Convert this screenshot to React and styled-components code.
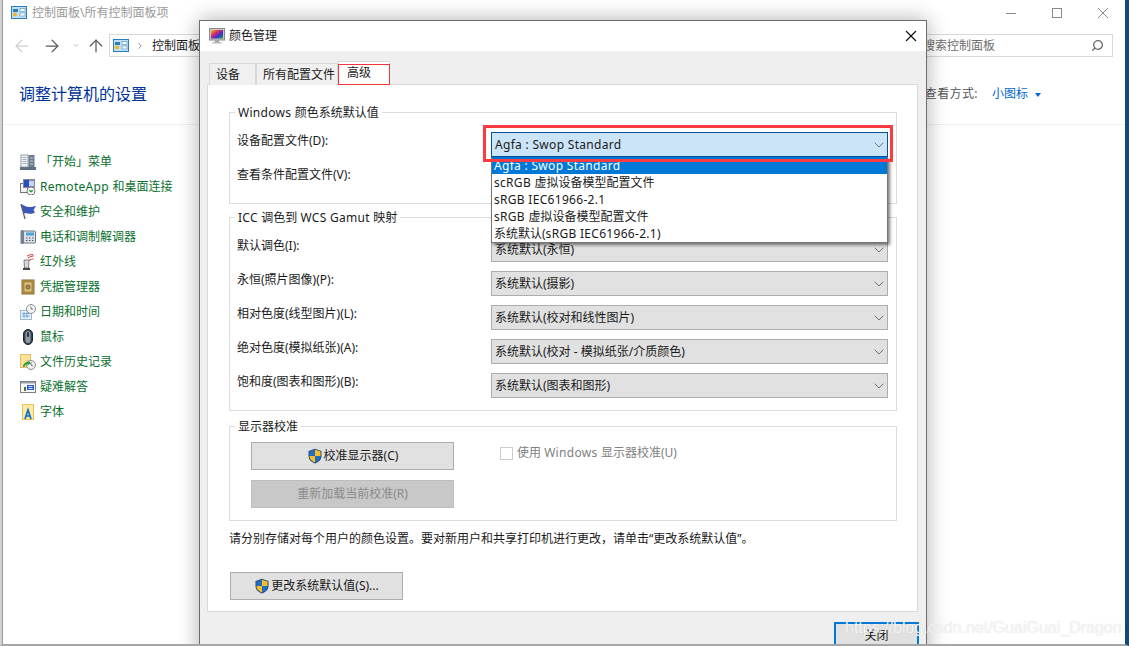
import React from 'react'
import styled, { createGlobalStyle } from 'styled-components'
import { ArrowLeft, ArrowRight, ArrowUp, ChevronDown, ChevronRight, Search } from 'lucide-react'

const FONT = '"Noto Sans", "Noto Sans CJK SC", sans-serif'

const GlobalStyle = createGlobalStyle`
    * { box-sizing: border-box; }
    html, body {
        margin: 0;
        width: 1129px;
        height: 646px;
        overflow: hidden;
        background: #fff;
    }
    body {
        font-family: ${FONT};
        font-size: 12px;
        line-height: 18px;
        color: #1a1a1a;
    }
`

// Ventana de fondo: panel de control
const Page = styled.div`
    position: relative;
    width: 1129px;
    height: 646px;
    overflow: hidden;
    border-left: 2px solid #d2d2d2;
    border-right: 4px solid #104a7c;
    border-bottom: 2px solid #a6a6a6;
`
const Window = styled.div`
    height: 100%;
    border-left: 1px solid #9a9a9a;
    background: #fff;
`
const TitleRow = styled.div`
    display: flex;
    align-items: center;
    height: 26px;
    padding-left: 8px;
`
const WindowTitle = styled.span`
    margin-left: 5px;
    color: #999;
`
const Controls = styled.div`
    display: flex;
    margin: 0 -1px 0 auto;
`
const ControlButton = styled.div`
    display: flex;
    align-items: center;
    justify-content: center;
    width: 46px;
    height: 26px;
    color: #8a8a8a;
`
const NavRow = styled.div`
    display: flex;
    align-items: center;
    height: 31px;
    padding: 8px 12px 0 0;
`
const NavSlot = styled.div`
    display: flex;
    align-items: center;
    justify-content: center;
    flex: none;
    width: ${({ $w }) => $w}px;
    margin-left: ${({ $ml }) => $ml}px;
    color: ${({ $color }) => $color};
`
const AddressBox = styled.div`
    display: flex;
    align-items: center;
    flex: 1;
    height: 23px;
    margin-left: 3px;
    padding-left: 3px;
    border: 1px solid #d9d9d9;
`
const AddressText = styled.span`
    margin-left: 6px;
`
const SearchBox = styled.div`
    display: flex;
    align-items: center;
    justify-content: space-between;
    width: 196px;
    height: 23px;
    margin-left: 12px;
    padding: 0 8px 0 5px;
    border: 1px solid #d9d9d9;
    color: #6d6d6d;
`
const FlippedSearch = styled(Search)`
    transform: scaleX(-1);
    color: #666;
`
const HeadingRow = styled.div`
    display: flex;
    align-items: center;
    height: 67px;
    padding: 7px 84px 0 16px;
`
const Heading = styled.h1`
    margin: 0;
    font-size: 16px;
    font-weight: 400;
    color: #003399;
`
const ViewBy = styled.div`
    display: flex;
    align-items: center;
    margin-left: auto;
    color: #555;
`
const ViewLabel = styled.span`
    letter-spacing: 0.4px;
`
const ViewLink = styled.span`
    margin-left: 14px;
    color: #0066cc;
`
const Caret = styled.span`
    width: 0;
    height: 0;
    margin: 1px 0 0 7px;
    border-left: 3.5px solid transparent;
    border-right: 3.5px solid transparent;
    border-top: 4px solid #0066cc;
`
const Divider = styled.div`
    height: 1px;
    background: linear-gradient(90deg, #eef4fa, #d9e6f3 50%, #eef4fa);
`
const Sidebar = styled.ul`
    margin: 0;
    padding: 24px 0 0 17px;
    list-style: none;
`
const SideItem = styled.li`
    display: flex;
    align-items: center;
    gap: 4px;
    height: 25px;
    color: #0a6f2e;
`

// Dialogo "Administracion del color"
const Dialog = styled.div`
    position: absolute;
    left: 197px;
    top: 20px;
    display: flex;
    flex-direction: column;
    width: 728px;
    height: 640px;
    border: 1px solid #6e6e6e;
    background: #efefef;
    box-shadow: 0 0 20px rgba(0, 0, 0, 0.32);
`
const DialogTitle = styled.div`
    display: flex;
    align-items: center;
    flex: none;
    height: 30px;
    padding: 0 9px;
    background: #fff;
`
const DialogName = styled.span`
    margin-left: 4px;
`
const DialogClose = styled.div`
    display: flex;
    margin-left: auto;
    color: #111;
`
const DialogBody = styled.div`
    display: flex;
    flex-direction: column;
    flex: 1;
    padding: 11px 8px 0 7px;
`
const Tabs = styled.div`
    display: flex;
    align-items: flex-end;
    height: 23px;
    padding-left: 2px;
    margin-bottom: -1px;
`
const Tab = styled.div`
    position: relative;
    width: ${({ $w }) => $w}px;
    height: ${({ $active }) => ($active ? '24px' : '22px')};
    padding: ${({ $active }) => ($active ? '2px 0 0 8px' : '2px 0 0 6px')};
    border: 1px solid #d9d9d9;
    border-bottom: none;
    background: ${({ $active }) => ($active ? '#fff' : '#f0f0f0')};
    z-index: ${({ $active }) => ($active ? 2 : 0)};

    ${({ $active }) => $active && `
        &::after {
            content: '';
            position: absolute;
            inset: 2px -1px 0 -1px;
            border: 1px solid #f0353b;
        }
    `}
`
const Panel = styled.div`
    display: flex;
    flex-direction: column;
    height: 528px;
    padding: 27px 20px 0 21px;
    border: 1px solid #d9d9d9;
    background: #fff;
`
const Group = styled.div`
    position: relative;
    margin-top: ${({ $mt }) => $mt || 0}px;
    padding: 19px 9px 12px 7px;
    border: 1px solid #dcdcdc;
`
const Legend = styled.span`
    position: absolute;
    left: 5px;
    top: -9px;
    padding: 0 3px;
    background: #fff;
    white-space: nowrap;
`
const FormGrid = styled.div`
    display: grid;
    grid-template-columns: 254px 397px;
    row-gap: 9px;
`
const FieldLabel = styled.label`
    align-self: start;
`
const ComboWrap = styled.div`
    position: relative;
`
const ComboBox = styled.div`
    display: flex;
    align-items: center;
    justify-content: space-between;
    height: 25px;
    padding: 0 3px;
    border: 1px solid ${({ $active }) => ($active ? '#00549a' : '#adadad')};
    background: ${({ $active }) => ($active ? '#cce4f7' : '#e1e1e1')};
`
const ComboArrow = styled(ChevronDown)`
    margin-right: -3px;
    color: #555;
`
const DropList = styled.ul`
    position: absolute;
    left: 0;
    right: 0;
    top: 100%;
    z-index: 5;
    margin: 0;
    padding: 0;
    list-style: none;
    border: 1px solid #767676;
    border-top: none;
    background: #fff;
    box-shadow: 2px 2px 3px rgba(0, 0, 0, 0.5);
`
const DropItem = styled.li`
    height: 17px;
    padding-left: 2px;
    line-height: 17px;
    color: ${({ $selected }) => ($selected ? '#fff' : '#1a1a1a')};
    background: ${({ $selected }) => ($selected ? '#0078d7' : 'transparent')};
`
const RedMark = styled.div`
    position: absolute;
    inset: -7px -5px -5px -8px;
    z-index: 6;
    border: 3px solid #fb3a41;
    pointer-events: none;
`
const CalibrateRow = styled.div`
    display: flex;
    gap: 46px;
    padding: 0 0 0 14px;
`
const ButtonColumn = styled.div`
    display: flex;
    flex-direction: column;
    gap: 10px;
    margin-top: -4px;
`
const Button = styled.div`
    display: flex;
    align-items: center;
    justify-content: center;
    gap: 1px;
    width: ${({ $w }) => $w}px;
    height: 28px;
    border: 1px solid ${({ $disabled }) => ($disabled ? '#bdbdbd' : '#adadad')};
    background: ${({ $disabled }) => ($disabled ? '#c8c8c8' : '#e1e1e1')};
    color: ${({ $disabled }) => ($disabled ? '#8b8b8b' : '#1a1a1a')};
`
const CheckRow = styled.div`
    display: flex;
    align-items: center;
    gap: 4px;
    height: 18px;
    margin-top: -2px;
    color: #808080;
`
const CheckBox = styled.span`
    width: 13px;
    height: 13px;
    border: 1px solid #cccccc;
    background: #fff;
`
const Note = styled.p`
    margin: 9px 0 0;
    white-space: nowrap;
`
const DefaultsButton = styled(Button)`
    margin: 24px 0 0 1px;
`
const Footer = styled.div`
    display: flex;
    justify-content: flex-end;
    margin: 10px -1px 0 0;
`
const CloseButton = styled.div`
    width: 85px;
    height: 34px;
    padding-top: 2px;
    text-align: center;
    line-height: 20px;
    border: 2px solid #0078d7;
    background: #e1e1e1;
`
const Watermark = styled.div`
    position: absolute;
    left: 843px;
    top: 618px;
    z-index: 9;
    font-family: "Liberation Sans", Arial, sans-serif;
    font-size: 16px;
    line-height: 20px;
    white-space: nowrap;
    color: rgba(248, 248, 248, 0.92);
    text-shadow: 0 0 1px rgba(170, 170, 170, 0.45);
`
// Las palabras latinas salen algo mas anchas que en Noto Sans
const Latin = styled.span`
    letter-spacing: 0.3px;
`
const Mixed = ({ text }) => text.split(/([A-Za-z][A-Za-z0-9 :.\-]{2,})/).map((part, index) => (
    index % 2 ? <Latin key={index}>{part}</Latin> : part
))

// Iconos dibujados a mano
const Ico = ({ size = 16, children }) => (
    <svg width={size} height={size} viewBox="0 0 16 16" style={{ flex: 'none' }}>{children}</svg>
)

const PanelIcon = () => (
    <Ico>
        <rect x="0.5" y="1.5" width="15" height="12" fill="#bfe0f5" stroke="#2b7cb8" />
        <rect x="2" y="4" width="5" height="3" fill="#2b7cb8" />
        <circle cx="4" cy="9.5" r="2" fill="#f0b429" />
        <rect x="9" y="3.5" width="5" height="3" fill="#fff" stroke="#4a90c0" strokeWidth="0.6" />
        <rect x="9" y="8" width="5" height="3" fill="#fff" stroke="#4a90c0" strokeWidth="0.6" />
    </Ico>
)
const StartIcon = () => (
    <Ico>
        <rect x="0" y="13" width="16" height="3" fill="#5d6d85" />
        <rect x="1" y="1" width="7" height="12" fill="#f4f4f4" stroke="#7b8797" strokeWidth="0.8" />
        <rect x="8.5" y="1" width="6" height="12" fill="#6d7c90" />
        <path d="M2.5 3.5h4M2.5 5.5h4M2.5 7.5h4M2.5 9.5h4" stroke="#a5adb8" />
        <path d="M10 4h3M10 7h3M10 10h3" stroke="#c4ccd6" />
    </Ico>
)
const RemoteIcon = () => (
    <Ico>
        <rect x="0.5" y="4.5" width="7" height="9" fill="#f2f2f2" stroke="#777" />
        <rect x="3.5" y="0.5" width="11" height="8" fill="#2a49c4" stroke="#8a8a8a" />
        <rect x="9" y="1.5" width="5" height="6" fill="#c5d6ee" />
        <circle cx="11" cy="12" r="4" fill="#fff" stroke="#777" />
        <path d="M9 12h4M9.6 10.8l1.4 2.4M12.4 10.8L11 13.2" stroke="#2d9a34" strokeWidth="1.1" fill="none" />
    </Ico>
)
const FlagIcon = () => (
    <Ico>
        <path d="M1 0l4 15" stroke="#5a5a5a" strokeWidth="1.2" />
        <path d="M1 0c3 1 5 3 8 3 2.500 0 5-.5 7-1l-2.500 4 1.500 2.500c-2.500 1.500-5 1.500-7 1-1.500-.4-3-.5-4 0z" fill="#3a57b8" />
    </Ico>
)
const PhoneIcon = () => (
    <Ico>
        <rect x="2.500" y="2" width="13" height="12" rx="1" fill="#dbe1e8" stroke="#6b7684" />
        <rect x="0.500" y="1" width="3.500" height="14" rx="1.500" fill="#77818f" />
        <rect x="6" y="3.500" width="8" height="3" fill="#4fa0d8" />
        <path d="M6 9h1.500M9 9h1.500M12 9h1.500M6 11.500h1.500M9 11.500h1.500M12 11.500h1.500" stroke="#555" />
    </Ico>
)
const InfraredIcon = () => (
    <Ico>
        <path d="M4 6h5l-.5 8h-4z" fill="#d8d8d8" stroke="#666" strokeWidth="0.8" />
        <rect x="3" y="14" width="7" height="2" fill="#444" />
        <path d="M8 4c2-1.500 4-2 6-2M9 6.500c1.500-1 3-1.500 4.500-1.500M7 2c2-1 4-1.500 6-1.500" stroke="#c8383a" fill="none" />
    </Ico>
)
const CredentialIcon = () => (
    <Ico>
        <rect x="2" y="1" width="12" height="14" fill="#b8954c" stroke="#8c6d2f" />
        <rect x="4" y="3" width="8" height="10" fill="#d8bd7c" stroke="#8c6d2f" strokeWidth="0.6" />
        <circle cx="8" cy="8" r="2" fill="#a88a4c" stroke="#6d5526" strokeWidth="0.8" />
    </Ico>
)
const DateIcon = () => (
    <Ico>
        <rect x="0.500" y="6.500" width="11" height="9" fill="#eaf2fb" stroke="#9fb6cf" />
        <path d="M2 9.500h8M2 12h8M4 8v6M7 8v6" stroke="#5f9ad6" strokeWidth="0.8" />
        <circle cx="11" cy="5" r="4.500" fill="#f5f5f5" stroke="#8c8c8c" />
        <path d="M11 2.500V5h2" stroke="#555" fill="none" strokeWidth="0.8" />
    </Ico>
)
const MouseIcon = () => (
    <Ico>
        <rect x="3.500" y="0.500" width="9" height="15" rx="4.500" fill="#39424f" stroke="#20262e" />
        <rect x="5.500" y="2" width="5" height="12" rx="2.500" fill="#8e99a8" />
        <rect x="7" y="3" width="2" height="5" rx="1" fill="#2a3038" />
    </Ico>
)
const HistoryIcon = () => (
    <Ico>
        <rect x="0.500" y="0.500" width="10" height="13" fill="#fbe29a" stroke="#e2bf5a" />
        <circle cx="11" cy="11" r="4.500" fill="#f0f0f0" stroke="#8a8a8a" />
        <path d="M11 8.500V11l1.800 1" stroke="#555" fill="none" strokeWidth="0.8" />
        <path d="M3 13c0-3 2-5 5-5l-1-2 4 3-4 3 1-2c-2 0-3 1-3.500 3z" fill="#2f9d3a" />
    </Ico>
)
const TroubleIcon = () => (
    <Ico>
        <rect x="0.500" y="2.500" width="15" height="11" fill="#f6f6f6" stroke="#7d7d7d" />
        <rect x="1" y="3" width="14" height="1.500" fill="#9aa3ad" />
        <rect x="7" y="6" width="7" height="5" fill="#2a5ec4" />
        <rect x="4" y="8" width="2" height="4" fill="#5b6f3a" />
        <path d="M8.500 7.500h4M8.500 9.500h4" stroke="#cfe0f5" />
    </Ico>
)
const FontIcon = () => (
    <Ico>
        <rect x="2.500" y="0.500" width="11" height="15" fill="#fde9a8" stroke="#e9c451" />
        <path d="M5 15l3-9 3 9M6 12h4" stroke="#0e6fc7" strokeWidth="1.700" fill="none" />
    </Ico>
)
const Shield = () => (
    <Ico size={16}>
        <path d="M8 0.800L14.500 3v5c0 3.800-3 6.300-6.500 7.500C4.500 14.300 1.500 11.800 1.500 8V3z" fill="#2a4a78" />
        <path d="M8 1.800L2.500 3.600V8H8z" fill="#1f6fc4" />
        <path d="M8 1.800l5.500 1.800V8H8z" fill="#f6bf2a" />
        <path d="M2.500 8H8v6.400C5 13.300 2.500 11.200 2.500 8z" fill="#f6bf2a" />
        <path d="M13.500 8H8v6.400c3-1.100 5.500-3.200 5.500-6.400z" fill="#1f6fc4" />
    </Ico>
)
const MonitorIcon = () => (
    <Ico>
        <defs>
            <linearGradient id="screenFill" x1="0" y1="0" x2="1" y2="1">
                <stop offset="0" stopColor="#e8d020" />
                <stop offset="0.35" stopColor="#e02a60" />
                <stop offset="0.65" stopColor="#3a30d0" />
                <stop offset="1" stopColor="#20a050" />
            </linearGradient>
        </defs>
        <rect x="0.500" y="0.500" width="15" height="11.500" fill="#c9c9c9" stroke="#8a8a8a" />
        <rect x="2" y="2" width="12" height="8.500" fill="url(#screenFill)" />
        <rect x="6" y="12" width="4" height="2" fill="#a0a0a0" />
        <rect x="3.500" y="14" width="9" height="1.500" fill="#b8b8b8" />
    </Ico>
)
const LineGlyph = ({ children }) => (
    <svg width="12" height="12" viewBox="0 0 12 12" fill="none" stroke="currentColor">{children}</svg>
)

const sideItems = [
    { icon: StartIcon, label: '「开始」菜单' },
    { icon: RemoteIcon, label: 'RemoteApp 和桌面连接' },
    { icon: FlagIcon, label: '安全和维护' },
    { icon: PhoneIcon, label: '电话和调制解调器' },
    { icon: InfraredIcon, label: '红外线' },
    { icon: CredentialIcon, label: '凭据管理器' },
    { icon: DateIcon, label: '日期和时间' },
    { icon: MouseIcon, label: '鼠标' },
    { icon: HistoryIcon, label: '文件历史记录' },
    { icon: TroubleIcon, label: '疑难解答' },
    { icon: FontIcon, label: '字体' },
]

const profiles = [
    'Agfa : Swop Standard',
    'scRGB 虚拟设备模型配置文件',
    'sRGB IEC61966-2.1',
    'sRGB 虚拟设备模型配置文件',
    '系统默认(sRGB IEC61966-2.1)',
]

const gamutRows = [
    { label: '默认调色(I):', value: '系统默认(永恒)' },
    { label: '永恒(照片图像)(P):', value: '系统默认(摄影)' },
    { label: '相对色度(线型图片)(L):', value: '系统默认(校对和线性图片)' },
    { label: '绝对色度(模拟纸张)(A):', value: '系统默认(校对 - 模拟纸张/介质颜色)' },
    { label: '饱和度(图表和图形)(B):', value: '系统默认(图表和图形)' },
]

const Combo = ({ value, active, children }) => (
    <ComboWrap>
        <ComboBox $active={active}>
            <span><Mixed text={value} /></span>
            <ComboArrow size={16} strokeWidth={1.2} />
        </ComboBox>
        {children}
    </ComboWrap>
)

const ColorDialog = () => (
    <Dialog>
        <DialogTitle>
            <MonitorIcon />
            <DialogName>颜色管理</DialogName>
            <DialogClose>
                <LineGlyph><path d="M1 1l10 10M11 1L1 11" strokeWidth="1.200" /></LineGlyph>
            </DialogClose>
        </DialogTitle>
        <DialogBody>
            <Tabs>
                <Tab $w={47}>设备</Tab>
                <Tab $w={82}>所有配置文件</Tab>
                <Tab $w={52} $active>高级</Tab>
            </Tabs>
            <Panel>
                <Group>
                    <Legend><Mixed text="Windows 颜色系统默认值" /></Legend>
                    <FormGrid>
                        <FieldLabel>设备配置文件(D):</FieldLabel>
                        <Combo value={profiles[0]} active>
                            <DropList>
                                {profiles.map((item, index) => (
                                    <DropItem key={item} $selected={index === 0}><Mixed text={item} /></DropItem>
                                ))}
                            </DropList>
                            <RedMark />
                        </Combo>
                        <FieldLabel>查看条件配置文件(V):</FieldLabel>
                        <Combo value="" />
                    </FormGrid>
                </Group>
                <Group $mt={13}>
                    <Legend><Mixed text="ICC 调色到 WCS Gamut 映射" /></Legend>
                    <FormGrid>
                        {gamutRows.map(row => (
                            <React.Fragment key={row.label}>
                                <FieldLabel>{row.label}</FieldLabel>
                                <Combo value={row.value} />
                            </React.Fragment>
                        ))}
                    </FormGrid>
                </Group>
                <Group $mt={15}>
                    <Legend>显示器校准</Legend>
                    <CalibrateRow>
                        <ButtonColumn>
                            <Button $w={203}><Shield />校准显示器(C)</Button>
                            <Button $w={203} $disabled>重新加载当前校准(R)</Button>
                        </ButtonColumn>
                        <CheckRow>
                            <CheckBox />
                            <span><Mixed text="使用 Windows 显示器校准(U)" /></span>
                        </CheckRow>
                    </CalibrateRow>
                </Group>
                <Note>请分别存储对每个用户的颜色设置。要对新用户和共享打印机进行更改，请单击“更改系统默认值”。</Note>
                <DefaultsButton $w={173}><Shield />更改系统默认值(S)...</DefaultsButton>
            </Panel>
            <Footer>
                <CloseButton>关闭</CloseButton>
            </Footer>
        </DialogBody>
    </Dialog>
)

export default function App() {
    return (
        <Page>
            <GlobalStyle />
            <Window>
                <TitleRow>
                    <PanelIcon />
                    <WindowTitle>控制面板\所有控制面板项</WindowTitle>
                    <Controls>
                        <ControlButton>
                            <LineGlyph><path d="M1 6.500h10" /></LineGlyph>
                        </ControlButton>
                        <ControlButton>
                            <LineGlyph><rect x="1.500" y="1.500" width="9" height="9" /></LineGlyph>
                        </ControlButton>
                        <ControlButton>
                            <LineGlyph><path d="M1 1l10 10M11 1L1 11" /></LineGlyph>
                        </ControlButton>
                    </Controls>
                </TitleRow>
                <NavRow>
                    <NavSlot $w={20} $ml={9} $color="#cfcfcf"><ArrowLeft size={20} strokeWidth={1.5} /></NavSlot>
                    <NavSlot $w={20} $ml={10} $color="#5a5a5a"><ArrowRight size={20} strokeWidth={1.5} /></NavSlot>
                    <NavSlot $w={8} $ml={10} $color="#8a8a8a"><ChevronDown size={11} strokeWidth={1.6} /></NavSlot>
                    <NavSlot $w={20} $ml={6} $color="#5a5a5a"><ArrowUp size={20} strokeWidth={1.5} /></NavSlot>
                    <AddressBox>
                        <PanelIcon />
                        <NavSlot $w={12} $ml={5} $color="#777"><ChevronRight size={10} /></NavSlot>
                        <AddressText>控制面板</AddressText>
                    </AddressBox>
                    <SearchBox>
                        搜索控制面板
                        <FlippedSearch size={13} strokeWidth={2.4} />
                    </SearchBox>
                </NavRow>
                <HeadingRow>
                    <Heading>调整计算机的设置</Heading>
                    <ViewBy>
                        <ViewLabel>查看方式:</ViewLabel>
                        <ViewLink>小图标</ViewLink>
                        <Caret />
                    </ViewBy>
                </HeadingRow>
                <Divider />
                <Sidebar>
                    {sideItems.map(item => (
                        <SideItem key={item.label}>
                            <item.icon />
                            <span><Mixed text={item.label} /></span>
                        </SideItem>
                    ))}
                </Sidebar>
            </Window>
            <ColorDialog />
            <Watermark>https://blog.csdn.net/GuaiGuai_Dragon</Watermark>
        </Page>
    )
}
